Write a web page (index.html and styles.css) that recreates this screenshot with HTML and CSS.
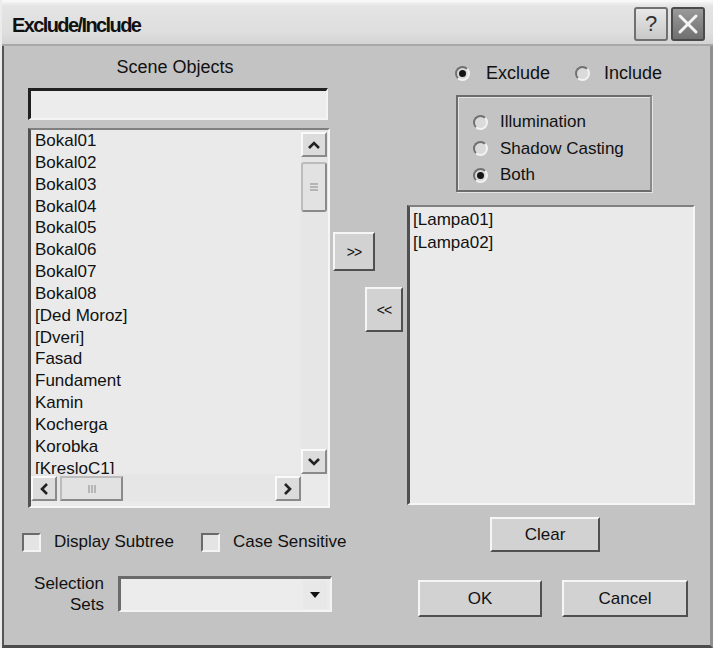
FILE: index.html
```html
<!DOCTYPE html>
<html>
<head>
<meta charset="utf-8">
<title>Exclude/Include</title>
<link rel="stylesheet" href="styles.css">
</head>
<body>
<div class="window">
  <div class="titlebar">
    <span class="title">Exclude/Include</span>
    <div class="tb-buttons">
      <span class="tb-btn help">?</span>
      <span class="tb-btn close">
        <svg width="22" height="22" viewBox="0 0 22 22"><path d="M3 3 L19 19 M19 3 L3 19" stroke="#f4f4f4" stroke-width="3" stroke-linecap="round"/></svg>
      </span>
    </div>
  </div>
  <div class="content">
    <div class="col-left">
      <div class="scene-label">Scene Objects</div>
      <div class="textinput"></div>
      <div class="listbox scene-list">
        <div class="items">
          <div>Bokal01</div>
          <div>Bokal02</div>
          <div>Bokal03</div>
          <div>Bokal04</div>
          <div>Bokal05</div>
          <div>Bokal06</div>
          <div>Bokal07</div>
          <div>Bokal08</div>
          <div>[Ded Moroz]</div>
          <div>[Dveri]</div>
          <div>Fasad</div>
          <div>Fundament</div>
          <div>Kamin</div>
          <div>Kocherga</div>
          <div>Korobka</div>
          <div>[KresloC1]</div>
        </div>
        <div class="vscroll">
          <span class="sbtn"><svg width="14" height="10" viewBox="0 0 14 10"><path d="M2 8 L7 3 L12 8" fill="none" stroke="#222" stroke-width="2.6"/></svg></span>
          <span class="vthumb"><svg width="10" height="10" viewBox="0 0 10 10"><path d="M1 2H9M1 5H9M1 8H9" stroke="#888" stroke-width="1"/></svg></span>
          <span class="vtrack"></span>
          <span class="sbtn"><svg width="14" height="10" viewBox="0 0 14 10"><path d="M2 2 L7 7 L12 2" fill="none" stroke="#222" stroke-width="2.6"/></svg></span>
        </div>
        <div class="hscroll">
          <span class="sbtn"><svg width="10" height="14" viewBox="0 0 10 14"><path d="M8 2 L3 7 L8 12" fill="none" stroke="#222" stroke-width="2.6"/></svg></span>
          <span class="hthumb"><svg width="10" height="10" viewBox="0 0 10 10"><path d="M2 1V9M5 1V9M8 1V9" stroke="#888" stroke-width="1"/></svg></span>
          <span class="htrack"></span>
          <span class="sbtn"><svg width="10" height="14" viewBox="0 0 10 14"><path d="M2 2 L7 7 L2 12" fill="none" stroke="#222" stroke-width="2.6"/></svg></span>
        </div>
        <div class="corner"></div>
      </div>
      <div class="checks">
        <label class="check"><span class="cbox"></span>Display Subtree</label>
        <label class="check"><span class="cbox"></span>Case Sensitive</label>
      </div>
      <div class="selsets">
        <div class="selsets-label">Selection<br>Sets</div>
        <div class="combo">
          <span class="combo-arrow"><svg width="12" height="8" viewBox="0 0 12 8"><path d="M1 1 H11 L6 7 Z" fill="#111"/></svg></span>
        </div>
      </div>
    </div>
    <div class="col-mid">
      <div class="btn move-right">&gt;&gt;</div>
      <div class="btn move-left">&lt;&lt;</div>
    </div>
    <div class="col-right">
      <div class="mode-row">
        <label class="radio"><span class="rdot on"></span>Exclude</label>
        <label class="radio"><span class="rdot"></span>Include</label>
      </div>
      <div class="groupbox">
        <label class="radio"><span class="rdot"></span>Illumination</label>
        <label class="radio"><span class="rdot"></span>Shadow Casting</label>
        <label class="radio"><span class="rdot on"></span>Both</label>
      </div>
      <div class="listbox light-list">
        <div>[Lampa01]</div>
        <div>[Lampa02]</div>
      </div>
      <div class="clear-row"><div class="btn clear">Clear</div></div>
      <div class="ok-row">
        <div class="btn ok">OK</div>
        <div class="btn cancel">Cancel</div>
      </div>
    </div>
  </div>
</div>
</body>
</html>
```

FILE: styles.css
```css
html, body {
  margin: 0;
  padding: 0;
  background: #c3c3c3;
}

body {
  font-family: "Liberation Sans", Arial, sans-serif;
  font-size: 17px;
  color: #111;
}

.window {
  width: 713px;
  height: 648px;
  box-sizing: border-box;
  background: #c3c3c3;
  border-left: 2px solid #ececec;
  overflow: hidden;
  display: flex;
  flex-direction: column;
}

.titlebar {
  height: 46px;
  box-sizing: border-box;
  flex: none;
  display: flex;
  align-items: center;
  justify-content: space-between;
  padding: 0 6px 0 10px;
  background: linear-gradient(#f2f2f2 0px, #e4e4e4 4px, #dedede 30px, #d2d2d2 44px);
  border-top: 2px solid #f8f8f8;
  border-bottom: 2px solid #a8a8a8;
}

.title {
  font-weight: bold;
  font-size: 20px;
  letter-spacing: -1.6px;
  color: #111;
  padding-top: 4px;
}

.tb-buttons {
  display: flex;
  gap: 3px;
  padding-top: 2px;
  padding-right: 2px;
}

.tb-btn {
  width: 34px;
  height: 34px;
  box-sizing: border-box;
  display: flex;
  align-items: center;
  justify-content: center;
  border-radius: 3px;
}

.help {
  background: linear-gradient(#e8e8e8, #c8c8c8);
  border: 2px solid #707070;
  font-size: 22px;
  color: #333;
}

.close {
  background: linear-gradient(#9a9a9a, #707070);
  border: 2px solid #4a4a4a;
}

.content {
  flex: 1;
  display: flex;
  padding-left: 18px;
  border-left: 2px solid #555;
  border-bottom: 3px solid #4c4c4c;
  border-right: 3px solid #909090;
}

.col-left {
  width: 310px;
  flex: none;
  display: flex;
  flex-direction: column;
}

.scene-label {
  margin: 11px 0 0 6px;
  width: 294px;
  text-align: center;
  line-height: 20px;
  font-size: 18px;
}

.textinput {
  margin: 11px 0 0 6px;
  width: 300px;
  height: 32px;
  box-sizing: border-box;
  background: #ececec;
  border-top: 3px solid #202020;
  border-left: 3px solid #202020;
  border-right: 2px solid #f4f4f4;
  border-bottom: 2px solid #f4f4f4;
}

.listbox {
  box-sizing: border-box;
  background: #eaeaea;
  border-top: 2px solid #808080;
  border-left: 3px solid #505050;
  border-right: 2px solid #f6f6f6;
  border-bottom: 2px solid #f6f6f6;
}

.scene-list {
  margin: 8px 0 0 6px;
  width: 302px;
  height: 380px;
  display: grid;
  grid-template-columns: 1fr 27px;
  grid-template-rows: 344px 27px;
  padding-bottom: 7px;
}

.items {
  overflow: hidden;
  padding-left: 4px;
  line-height: 21.85px;
}

.vscroll {
  display: flex;
  flex-direction: column;
  background: #e6e6e6;
  padding: 2px 0 0 0;
}

.sbtn {
  width: 26px;
  height: 25px;
  box-sizing: border-box;
  display: flex;
  align-items: center;
  justify-content: center;
  background: #dcdcdc;
  border-top: 2px solid #fafafa;
  border-left: 2px solid #fafafa;
  border-right: 2px solid #8a8a8a;
  border-bottom: 2px solid #8a8a8a;
  flex: none;
}

.vthumb {
  margin-top: 5px;
  width: 26px;
  height: 50px;
  box-sizing: border-box;
  background: #e2e2e2;
  border: 2px solid #bcbcbc;
  border-right-color: #8a8a8a;
  border-bottom-color: #8a8a8a;
  border-radius: 3px;
  display: flex;
  align-items: center;
  justify-content: center;
  flex: none;
}

.vtrack { flex: 1; }

.hscroll {
  display: flex;
  align-items: flex-start;
  background: #e6e6e6;
  padding-top: 2px;
}

.hthumb {
  margin-left: 3px;
  width: 63px;
  height: 25px;
  box-sizing: border-box;
  background: #e2e2e2;
  border: 2px solid #bcbcbc;
  border-right-color: #8a8a8a;
  border-bottom-color: #8a8a8a;
  display: flex;
  align-items: center;
  justify-content: center;
  flex: none;
}

.htrack { flex: 1; }

.corner { background: #eaeaea; }

.checks {
  margin-top: 24px;
  display: flex;
  align-items: center;
  gap: 27px;
  font-size: 17px;
  white-space: nowrap;
  width: 360px;
  height: 20px;
}

.check {
  display: flex;
  align-items: center;
  gap: 13px;
  flex: none;
}

.cbox {
  width: 19px;
  height: 19px;
  box-sizing: border-box;
  background: #e4e4e4;
  border-top: 2px solid #6a6a6a;
  border-left: 2px solid #6a6a6a;
  border-right: 2px solid #f4f4f4;
  border-bottom: 2px solid #f4f4f4;
  flex: none;
}

.selsets {
  margin-top: 21px;
  display: flex;
  align-items: center;
}

.selsets-label {
  width: 82px;
  text-align: right;
  line-height: 21px;
  font-size: 17px;
}

.combo {
  margin-left: 14px;
  width: 214px;
  height: 36px;
  box-sizing: border-box;
  background: #ececec;
  border-top: 3px solid #6a6a6a;
  border-left: 3px solid #6a6a6a;
  border-right: 2px solid #f4f4f4;
  border-bottom: 2px solid #f4f4f4;
  display: flex;
  align-items: center;
  justify-content: flex-end;
  padding-right: 3px;
}

.combo-arrow {
  width: 24px;
  height: 28px;
  display: flex;
  align-items: center;
  justify-content: center;
  background: #e8e8e8;
}

.col-mid {
  width: 75px;
  flex: none;
  display: flex;
  flex-direction: column;
}

.btn {
  box-sizing: border-box;
  display: flex;
  align-items: center;
  justify-content: center;
  background: #d2d2d2;
  border-top: 2px solid #f6f6f6;
  border-left: 2px solid #f6f6f6;
  border-right: 2px solid #505050;
  border-bottom: 2px solid #505050;
  font-size: 17px;
}

.move-right {
  margin: 186px 0 0 1px;
  width: 42px;
  height: 39px;
  font-size: 14px;
  letter-spacing: -1px;
}

.move-left {
  margin: 16px 0 0 33px;
  width: 38px;
  height: 45px;
  font-size: 14px;
  letter-spacing: -1px;
}

.col-right {
  width: 288px;
  flex: none;
  display: flex;
  flex-direction: column;
}

.mode-row {
  margin: 17px 0 0 48px;
  display: flex;
  gap: 25px;
  height: 20px;
  align-items: center;
  white-space: nowrap;
}

.radio {
  display: flex;
  align-items: center;
  gap: 16px;
  font-size: 18px;
  white-space: nowrap;
}

.mode-row .radio + .radio {
  gap: 14px;
}

.rdot {
  width: 15px;
  height: 15px;
  box-sizing: border-box;
  border-radius: 50%;
  background: #dadada;
  border: 2px solid #f2f2f2;
  border-top-color: #707070;
  border-left-color: #707070;
  position: relative;
  flex: none;
}

.rdot.on::after {
  content: "";
  position: absolute;
  left: 2px;
  top: 2px;
  width: 7px;
  height: 7px;
  border-radius: 50%;
  background: #151515;
}

.groupbox {
  margin: 12px 0 0 49px;
  width: 196px;
  height: 97px;
  box-sizing: border-box;
  border: 2px solid #6c6c6c;
  border-right-color: #8a8a8a;
  box-shadow: inset 1px 1px 0 #e4e4e4, 1px 1px 0 #e4e4e4;
  display: flex;
  flex-direction: column;
  justify-content: center;
  gap: 6.5px;
  padding: 10px 0 0 15px;
}

.groupbox .radio {
  height: 20px;
  gap: 12px;
  font-size: 17px;
}

.light-list {
  margin-top: 13px;
  width: 288px;
  height: 300px;
  padding: 1px 0 0 3px;
  line-height: 23px;
}

.clear-row {
  margin-top: 12px;
  padding-left: 83px;
}

.clear {
  width: 110px;
  height: 35px;
}

.ok-row {
  margin-top: 28px;
  display: flex;
  gap: 20px;
  padding-left: 11px;
}

.ok, .cancel {
  width: 124px;
  height: 37px;
}

.cancel {
  width: 126px;
}
```
